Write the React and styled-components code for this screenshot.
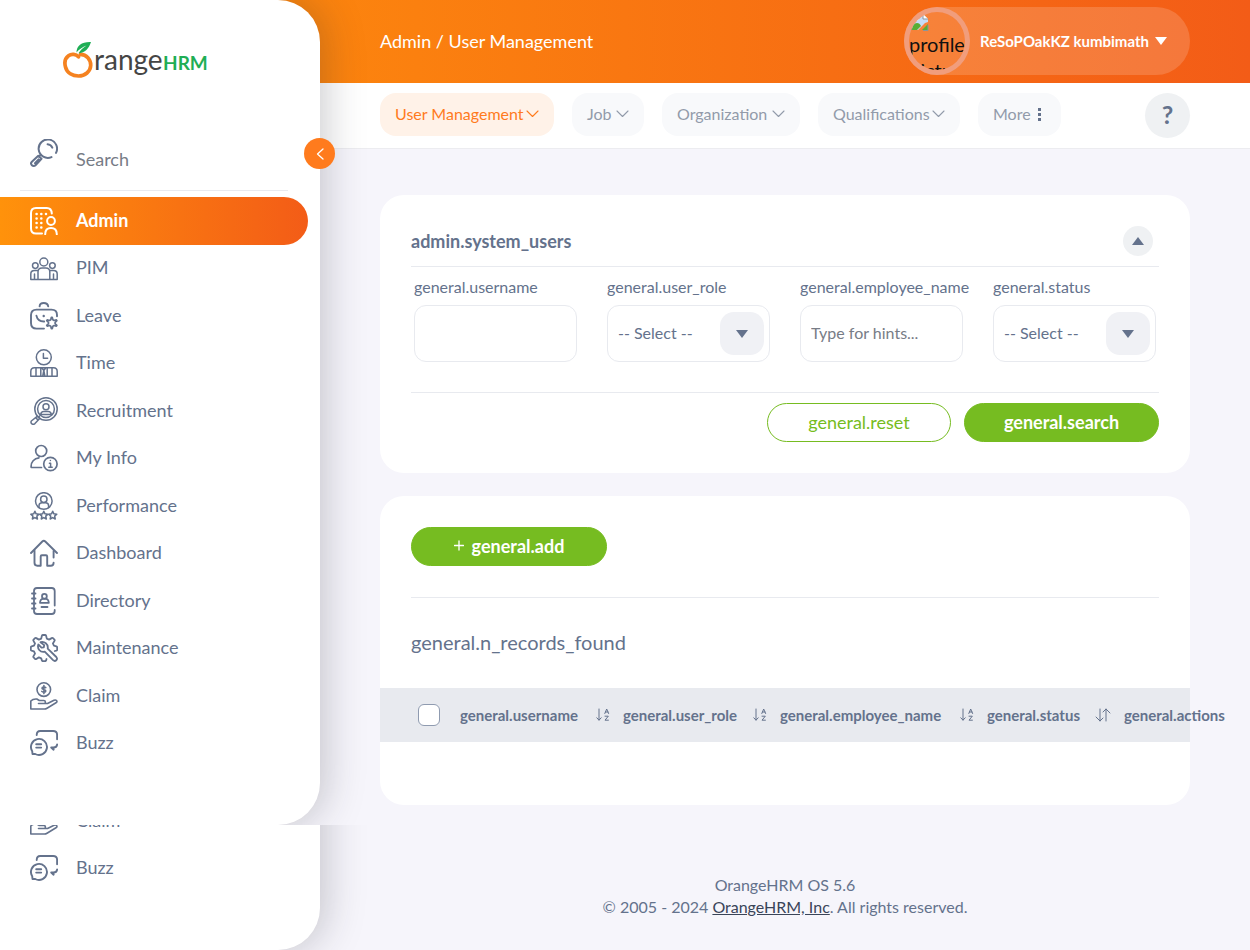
import React from "react";
import styled, { createGlobalStyle, css } from "styled-components";

const slate = "#64728c";
const orange = "#ff7b1d";
const green = "#76bc21";
const line = "#e8eaef";
const brandGradient = "linear-gradient(90deg, #ff920b, #f35c17)";

const GlobalStyle = createGlobalStyle`
  *, *::before, *::after { box-sizing: border-box; }
  body {
    margin: 0;
    background: #f6f5fb;
    color: ${slate};
    font-family: Lato, "Open Sans", sans-serif;
    font-size: 16px;
  }
  button, input, select { font: inherit; color: inherit; }
  h1, h2, p, ul { margin: 0; padding: 0; font-weight: 400; }
  ul { list-style: none; }
`;

const Shell = styled.div`
  display: grid;
  grid-template-columns: 320px minmax(0, 1fr);
  overflow-x: hidden;
`;

/* ---------- side panel ---------- */

const Sidebar = styled.aside`
  grid-column: 1;
  grid-row: 1;
  z-index: 2;
`;

const Slice = styled.div`
  clip-path: inset(0 -90px 0 0);
  ${(p) =>
    p.$tail &&
    css`
      display: flex;
      flex-direction: column;
      justify-content: flex-end;
      height: 125px;
    `}
`;

const Panel = styled.div`
  position: relative;
  flex: none;
  padding-top: ${(p) => (p.$tail ? "96px" : "0")};
  padding-bottom: 58px;
  background: #fff;
  border-radius: 0 42px 42px 0;
  box-shadow: 4px 0 40px rgba(40, 40, 50, 0.25);
`;

const Brand = styled.a`
  display: block;
  padding: 40px 0 52px 62px;
  line-height: 0;
`;

const SearchRow = styled.label`
  display: flex;
  align-items: flex-start;
  gap: 18px;
  height: 57px;
  margin: 0 32px 6px 20px;
  padding: 5px 0 0 10px;
  border-bottom: 1px solid ${line};
`;

const SearchInput = styled.input`
  width: 160px;
  height: 24px;
  margin-top: 8px;
  padding: 0;
  border: 0;
  outline: 0;
  background: transparent;
  font-size: 18px;
  &::placeholder { color: #777c86; opacity: 1; }
`;

const Menu = styled.ul`
  display: grid;
  grid-auto-rows: 1fr;
  height: ${(p) => (p.$short ? "95px" : "570px")};
`;

const MenuLink = styled.a`
  display: flex;
  align-items: center;
  gap: 18px;
  height: 100%;
  margin-right: 12px;
  padding-left: 30px;
  border-radius: 0 24px 24px 0;
  color: ${slate};
  font-size: 18px;
  line-height: 24px;
  text-decoration: none;
  ${(p) =>
    p.$active &&
    css`
      background: ${brandGradient};
      color: #fff;
      font-weight: 700;
    `}
`;

const MenuText = styled.span`
  padding-bottom: 2px;
`;

const CollapseButton = styled.button`
  position: absolute;
  top: 138px;
  right: -15px;
  display: grid;
  place-items: center;
  width: 31px;
  height: 31px;
  padding: 0;
  border: 0;
  border-radius: 50%;
  background: ${orange};
`;

/* ---------- top area ---------- */

const Page = styled.div`
  grid-column: 1 / -1;
  grid-row: 1;
  display: flex;
  flex-direction: column;
  min-width: 0;
`;

const TopBar = styled.header`
  display: flex;
  align-items: center;
  justify-content: space-between;
  height: 83px;
  padding: 0 60px 2px 380px;
  background: ${brandGradient};
  color: #fff;
`;

const Crumb = styled.h1`
  font-size: 18px;
  line-height: 24px;
`;

const UserButton = styled.button`
  display: flex;
  align-items: center;
  gap: 6px;
  width: 286px;
  height: 68px;
  padding: 0;
  border: 0;
  border-radius: 34px;
  background: rgba(255, 255, 255, 0.16);
  color: #fff;
  font-size: 15px;
  font-weight: 700;
`;

const Avatar = styled.span`
  display: flex;
  flex-direction: column;
  width: 66px;
  height: 68px;
  margin-right: 4px;
  border: 5px solid #f19d7c;
  border-radius: 50%;
  overflow: hidden;
  color: #111;
  font-size: 20px;
  font-weight: 400;
  line-height: 26px;
  text-align: left;
  svg { flex: none; margin: 1px 0 0 2px; }
`;

const TabBar = styled.nav`
  display: flex;
  align-items: flex-start;
  gap: 18px;
  height: 66px;
  padding: 10px 60px 0 380px;
  background: #fff;
  border-bottom: 1px solid #ececf0;
`;

const Tab = styled.button`
  display: flex;
  align-items: center;
  justify-content: space-between;
  width: ${(p) => p.$width}px;
  height: 43px;
  padding: 0 15px 2px;
  border: 0;
  border-radius: 16px;
  background: ${(p) => (p.$active ? "#fff2e8" : "#f8f9fb")};
  color: ${(p) => (p.$active ? orange : "#929baa")};
  font-size: 16px;
  white-space: nowrap;
`;

const HelpButton = styled.button`
  width: 45px;
  height: 45px;
  margin-left: auto;
  padding: 0 0 4px;
  border: 0;
  border-radius: 50%;
  background: #eff1f3;
  font-size: 25px;
  font-weight: 700;
`;

/* ---------- cards ---------- */

const Content = styled.main`
  display: flex;
  flex-direction: column;
  gap: 23px;
  padding: 46px 60px 0 380px;
`;

const Card = styled.section`
  padding: 31px 0;
  background: #fff;
  border-radius: 24px;
`;

const CardHead = styled.div`
  display: flex;
  align-items: center;
  justify-content: space-between;
  margin: 0 31px;
  padding: 0 6px 10px 0;
  border-bottom: 1px solid ${line};
`;

const CardTitle = styled.h2`
  font-size: 18px;
  font-weight: 700;
  line-height: 24px;
`;

const RoundButton = styled.button`
  display: grid;
  place-items: center;
  width: 30px;
  height: 30px;
  padding: 0;
  border: 0;
  border-radius: 50%;
  background: #eff1f3;
`;

const Filters = styled.div`
  display: grid;
  grid-template-columns: repeat(4, minmax(0, 1fr));
  gap: 30px;
  margin: 0 31px;
  padding: 10px 3px 30px;
  border-bottom: 1px solid ${line};
`;

const Field = styled.div`
  display: flex;
  flex-direction: column;
  gap: 8px;
`;

const FieldLabel = styled.label`
  font-size: 16px;
  line-height: 20px;
  white-space: nowrap;
`;

const controlBox = css`
  width: 100%;
  height: 57px;
  padding: 0 10px 2px;
  border: 1px solid ${line};
  border-radius: 12px;
  outline: 0;
  background: #fff;
  font-size: 16px;
`;

const TextInput = styled.input`
  ${controlBox}
  &::placeholder { color: #777c86; opacity: 1; }
`;

const SelectWrap = styled.div`
  display: grid;
  grid-template-columns: minmax(0, 1fr) 50px;
  align-items: center;
`;

const Select = styled.select`
  ${controlBox}
  grid-column: 1 / -1;
  grid-row: 1;
  appearance: none;
`;

const SelectArrow = styled.span`
  grid-column: 2;
  grid-row: 1;
  display: grid;
  place-items: center;
  width: 44px;
  height: 43px;
  border-radius: 14px;
  background: #f0f1f5;
  pointer-events: none;
`;

const Actions = styled.div`
  display: flex;
  justify-content: flex-end;
  gap: 13px;
  padding: 10px 31px 0;
`;

const PillButton = styled.button`
  display: flex;
  align-items: center;
  justify-content: center;
  gap: 8px;
  width: ${(p) => p.$width}px;
  height: 39px;
  padding: 0 0 2px;
  border: 1px solid ${green};
  border-radius: 20px;
  background: ${(p) => (p.$outline ? "#fff" : green)};
  color: ${(p) => (p.$outline ? green : "#fff")};
  font-size: 18px;
  font-weight: ${(p) => (p.$outline ? 400 : 700)};
`;

const Toolbar = styled.div`
  margin: 0 31px;
  padding-bottom: 31px;
  border-bottom: 1px solid ${line};
`;

const Count = styled.p`
  padding: 31px 31px 33px;
  font-size: 20px;
  line-height: 26px;
`;

const TableArea = styled.div`
  padding-bottom: 32px;
  background: linear-gradient(${line}, ${line}) 0 0 / 100% 54px no-repeat;
`;

const Table = styled.table`
  width: 849px;
  table-layout: fixed;
  border-collapse: collapse;
`;

const Head = styled.th`
  width: ${(p) => p.$width}px;
  height: 54px;
  padding: 0 0 0 ${(p) => p.$indent || 0}px;
  font-size: 15px;
  font-weight: 700;
  text-align: left;
  white-space: nowrap;
`;

const HeadInner = styled.span`
  display: flex;
  align-items: center;
  justify-content: space-between;
  padding-right: 13px;
`;

const Tick = styled.input`
  display: block;
  appearance: none;
  width: 22px;
  height: 22px;
  margin: 0;
  border: 1px solid #8f9bb0;
  border-radius: 6px;
  background: #fff;
`;

const SortButton = styled.button`
  display: block;
  padding: 0;
  border: 0;
  background: none;
  line-height: 0;
`;

const Footer = styled.footer`
  padding: 69px 60px 0 380px;
  font-size: 16px;
  line-height: 22px;
  text-align: center;
  a { color: #3a4458; }
`;

/* ---------- drawings ---------- */

const Icon = styled.svg`
  flex: none;
`;

const Glyph = ({ w = 28, h = 28, sw = 1.7, children, ...rest }) => (
  <Icon
    width={w}
    height={h}
    viewBox={`0 0 ${w} ${h}`}
    fill="none"
    stroke="currentColor"
    strokeWidth={sw}
    strokeLinecap="round"
    strokeLinejoin="round"
    aria-hidden="true"
    {...rest}
  >
    {children}
  </Icon>
);

const star = (cx, cy, r) =>
  "M" +
  Array.from({ length: 10 }, (_, i) => {
    const a = -Math.PI / 2 + (i * Math.PI) / 5;
    const d = i % 2 ? r * 0.48 : r;
    return `${(cx + d * Math.cos(a)).toFixed(2)} ${(cy + d * Math.sin(a)).toFixed(2)}`;
  }).join("L") +
  "Z";

const cog = (cx, cy, outer, inner, teeth) => {
  const step = (Math.PI * 2) / teeth;
  const pt = (a, r) => `${(cx + r * Math.cos(a)).toFixed(2)} ${(cy + r * Math.sin(a)).toFixed(2)}`;
  let d = "";
  for (let i = 0; i < teeth; i++) {
    const a = i * step - Math.PI / 2;
    d += `${i ? "L" : "M"}${pt(a - step * 0.3, inner)}L${pt(a - step * 0.08, outer)}L${pt(a + step * 0.08, outer)}L${pt(a + step * 0.3, inner)}`;
  }
  return d + "Z";
};

const drawings = {
  search: (
    <Glyph sw={2}>
      <path d="M26 13.9A9.200 9.200 0 1 0 21.500 18.100" />
      <path d="M17.600 5.200c2.300.2 3.900 1.400 4.700 3.400M10.500 15.800l-1.600 1.900M8.300 16.700l3.200 3-6 6.500c-1 1-2.600 1-3.600 0s-1-2.500 0-3.500zM8.600 20.400l-3.600 3.800" />
    </Glyph>
  ),
  admin: (
    <Glyph sw={2}>
      <path d="M21.8 6.5C21.6 3 20 1 16.8 1H6C2.8 1 1 2.8 1 6v15.5c0 3.200 1.800 5 5 5h6" />
      <circle cx="21" cy="14" r="3.9" />
      <path d="M15.2 27.2c0-4 2.200-6.200 5.800-6.200s5.800 2.200 5.800 6.200" />
      <path strokeWidth="2.6" d="M6.6 7h.01M11.3 7h.01M16 7h.01M6.6 11.5h.01M11.3 11.5h.01M6.6 16h.01M11.3 16h.01M6.6 20.5h.01M11.3 20.5h.01" />
    </Glyph>
  ),
  pim: (
    <Glyph sw={1.500}>
      <circle cx="13.8" cy="8" r="4" />
      <circle cx="5.3" cy="11.6" r="2.8" />
      <circle cx="22.4" cy="11.6" r="2.8" />
      <path d="M8 25.6V18c0-2.800 1.600-4 4-4h3.800c2.400 0 4 1.200 4 4v7.600M8 16.600H4.500C2 16.600.8 17.800.8 20v5.600h26.400V20c0-2.200-1.200-3.400-3.700-3.400h-3.700M4.500 20v5.600M23.500 20v5.600" />
    </Glyph>
  ),
  leave: (
    <Glyph sw={1.900}>
      <path d="M9.600 4.300C9.800 1.800 10.800 1 13.800 1s4 .8 4.400 3.300" />
      <path d="M14 26.600H6.500C2.800 26.600 1 24.600 1 21v-8c0-3.400 2-5.400 5.500-5.400h15C25 7.600 27 9.600 27 13v1.200" />
      <path d="M6.400 13.600c.8 3.600 3.600 6 7.800 5.900" />
      <path d="M13.700 14h.01" strokeWidth="2.400" />
      <path d={cog(21.800, 21, 5.600, 3.400, 6)} strokeWidth="1.700" />
    </Glyph>
  ),
  time: (
    <Glyph sw={1.500}>
      <circle cx="13.800" cy="8.300" r="7.500" />
      <path d="M13.400 4.500v4.800h4.200" />
      <path d="M.8 27.200v-4.600c0-2.500 1.200-3.800 3.700-3.800h19c2.500 0 3.700 1.300 3.700 3.800v4.600zM6 19v8M22 19v8M10.800 19v8M17.200 19v8M12.300 19.500l1.500 2 1.500-2M13.800 21.500l-1 5.500M13.800 21.500l1 5.500" />
    </Glyph>
  ),
  recruitment: (
    <Glyph sw={1.500}>
      <circle cx="16" cy="12" r="11.200" />
      <circle cx="16" cy="12" r="8.400" />
      <circle cx="16" cy="9.800" r="3" />
      <path d="M10.600 17.500c.4-2 1.400-2.900 3-2.900h4.800c1.600 0 2.600.9 3 2.900zM7.500 19.200l2.200 2.200-5 5.400c-1.800 1.400-4.600-.4-3.400-2.800zM8.600 20.200l.9-1.200M6 21l1.900 1.900" />
    </Glyph>
  ),
  info: (
    <Glyph sw={1.700}>
      <circle cx="11.200" cy="7" r="5.500" />
      <path d="M11.500 23.500H1.200C.5 18 4.500 14.300 9 13.800" />
      <circle cx="20.400" cy="20" r="6.700" />
      <path d="M20.400 16.600h.01M19.400 19.200h1.200v4M18.800 23.300h3.400" strokeWidth="1.500" />
    </Glyph>
  ),
  performance: (
    <Glyph sw={1.500}>
      <circle cx="13.800" cy="9" r="8.300" />
      <circle cx="13.800" cy="7.300" r="3.200" />
      <path d="M9 15.400v-1.600c0-2 1.300-3 3.200-3h3.200c1.900 0 3.200 1 3.200 3v1.600" />
      <path d={star(4.900, 23.500, 4.300) + star(13.800, 23.500, 4.300) + star(22.700, 23.500, 4.300)} fill="#fff" />
    </Glyph>
  ),
  dashboard: (
    <Glyph sw={1.900}>
      <path d="M1 14 12.300 2.500c1-1 2-1 3 0L27 14" />
      <path d="M4.500 11.500v12.300c0 1.800 1 2.900 2.800 2.900h3.400v-9.200c0-.8.4-1.200 1.200-1.200H16c.8 0 1.200.4 1.200 1.200v9.200h3.600c1.800 0 2.800-1.100 2.800-3M23.600 12v6.500" />
    </Glyph>
  ),
  directory: (
    <Glyph sw={1.800}>
      <path d="M24.700 18.500V4c0-2-1-3-3-3H7C5 1 4 2 4 4v20c0 2 1 3 3 3h14.700c2 0 3-1 3-3v-1" />
      <path d="M2 6.500h3.500M2 11.500h3.500M2 16.500h3.500M2 21.500h3.500M11.500 20h6" />
      <circle cx="14.400" cy="9.200" r="2.400" />
      <path d="M10 15.800c.2-2.600 1.400-4 3-4h2.800c1.600 0 2.800 1.400 3 4z" />
    </Glyph>
  ),
  maintenance: (
    <Glyph sw={1.800}>
      <path d="M11.200 4.600 11.900 1.800c.2-.6.500-.8 1.100-.8h2c.6 0 .9.200 1.100.8l.7 2.800 2.300 1 2.600-1.500c.5-.3.9-.3 1.300.1l1.400 1.400c.4.400.4.800.1 1.300l-1.600 2.600 1 2.200 2.500.7c.6.200.8.500.8 1.100v2c0 .6-.2.900-.8 1.100l-1.600.4M11.200 4.600l-2.300 1-2.600-1.500c-.5-.3-.9-.3-1.300.1L3.600 5.600c-.4.400-.4.800-.1 1.300l1.500 2.600-1 2.200-2.400.7c-.6.200-.8.500-.8 1.100v2c0 .6.200.9.800 1.100l2.400.7 1 2.300-1.500 2.500c-.3.500-.3.900.1 1.300L5 24.800c.4.400.8.400 1.300.1l2.600-1.500 2.300 1 .7 2c.2.600.5.800 1.100.8h2c.6 0 .9-.2 1.100-.8l.4-1.400" />
      <path d="M10.500 8.200c3.800-1.200 8 1.800 7.200 6.400l8.600 8.400c2 2.400-1 5.200-3.200 3.200l-8.400-8.500c-4.700 1-7.700-3.200-6.400-7.200l3.200 3.200 2.300-.4.400-2.200z" />
    </Glyph>
  ),
  claim: (
    <Glyph sw={1.600}>
      <circle cx="13.800" cy="7.600" r="6.800" />
      <path d="M15.800 5.700c-.6-.9-3.800-1-3.800.6 0 1.700 3.800.8 3.800 2.600 0 1.600-3.200 1.600-4 .5M13.900 3.600v8" />
      <path d="M.8 27V19c1.500-1.600 3.500-2.200 6-2l2.500 1.500h4.500c2 0 2.200 3 .2 3H8.500h9l6.500-3.200c2-1 4 .8 2.400 2.200L17 26.200c-.8.500-1.500.8-2.500.8z" />
    </Glyph>
  ),
  buzz: (
    <Glyph sw={1.900}>
      <path d="M6.700 6c0-3 1.300-4 3.500-4h13c2.500 0 3.900 1.300 3.900 3.800v4.400M27.100 15.500c-.2 2-1.500 3-3.700 3h-2.200l2.400 2.200v-2" />
      <path d="M2.200 22.200A8 8 0 1 1 5.200 25H2.500z" />
      <path d="M6.200 15.200h5M6.200 18.600h5" />
    </Glyph>
  ),
};

const Chevron = () => (
  <Glyph w={13} h={8} sw={1.100}>
    <path d="M1 1l5.500 5.500L12 1" />
  </Glyph>
);

const Caret = ({ up }) => (
  <Glyph w={12} h={8} sw={0}>
    <path fill="currentColor" d={up ? "M0 8 6 0l6 8z" : "M0 0h12L6 8z"} />
  </Glyph>
);

const SortAZ = () => (
  <Glyph w={14} h={14} sw={1}>
    <path d="M3 1v11M.8 9.800 3 12.200l2.200-2.400M8.800 5.500 10.700 1l1.900 4.500M9.400 4h2.600M9 8.200h3.300L9 12.200h3.400" />
  </Glyph>
);

const SortBoth = () => (
  <Glyph w={16} h={14} sw={1}>
    <path d="M5 1v12M1 9l4 4 3-3M11 13V1M8 4l3-3 4 4" />
  </Glyph>
);

const BrokenImage = () => (
  <svg width="18" height="18" viewBox="0 0 18 18" aria-hidden="true">
    <path d="M1 1h11l5 5v3l-3 1-7 7H1z" fill="#c5dcf7" />
    <path d="M12 1v5h5" fill="#fff" stroke="#8d9499" />
    <path d="M3 6c0-2 3-2 3-.5 2 0 2 2 0 2H3z" fill="#fff" />
    <path d="M1 17c0-4 2-7 5-7 2 0 3 1 4 3l-4 4z" fill="#59ad35" />
    <path d="m11 17 6-6v6z" fill="#59ad35" />
    <path d="M.5 17V1M17 12v5.500h-5" fill="none" stroke="#8d9499" />
  </svg>
);

const Logo = () => (
  <svg width="146" height="42" viewBox="0 0 146 42" role="img" aria-label="OrangeHRM">
    <path
      d="M16.500 16.800C14 14 9.500 13.500 6.500 15.700 3 18.200 2.400 23 3.500 27 5 33 10.500 36 16.500 36 23 36 28.500 31.500 28.700 25.500 28.900 19.500 24.500 14.500 18.500 14.300"
      fill="none"
      stroke="#f58220"
      strokeWidth="3.700"
      strokeLinecap="round"
    />
    <path d="M14.500 12.500C14.500 5.500 20 1.600 29 2c-2 6.500-6 11-12.500 11.200 2-3.200 4.500-5.600 8-7.700-4 1.600-7.500 4-10 7z" fill="#1fae55" />
    <text x="32" y="30" fontFamily="Lato" fontSize="28" fill="#454545">range</text>
    <text x="101" y="30" fontFamily="Lato" fontSize="19" fontWeight="700" fill="#1fae55">HRM</text>
  </svg>
);

/* ---------- data ---------- */

const menu = [
  ["admin", "Admin"],
  ["pim", "PIM"],
  ["leave", "Leave"],
  ["time", "Time"],
  ["recruitment", "Recruitment"],
  ["info", "My Info"],
  ["performance", "Performance"],
  ["dashboard", "Dashboard"],
  ["directory", "Directory"],
  ["maintenance", "Maintenance"],
  ["claim", "Claim"],
  ["buzz", "Buzz"],
];

const tabs = [
  ["User Management", 174],
  ["Job", 72],
  ["Organization", 138],
  ["Qualifications", 142],
];

const columns = [
  ["general.username", 163, SortAZ],
  ["general.user_role", 157, SortAZ],
  ["general.employee_name", 207, SortAZ],
  ["general.status", 137, SortBoth],
];

const MenuList = ({ items, short }) => (
  <Menu $short={short}>
    {items.map(([id, text]) => (
      <li key={id}>
        <MenuLink href="#" $active={id === "admin"}>
          {drawings[id]}
          <MenuText>{text}</MenuText>
        </MenuLink>
      </li>
    ))}
  </Menu>
);

const SelectField = ({ id, label }) => (
  <Field>
    <FieldLabel htmlFor={id}>{label}</FieldLabel>
    <SelectWrap>
      <Select id={id}>
        <option>-- Select --</option>
      </Select>
      <SelectArrow>
        <Caret />
      </SelectArrow>
    </SelectWrap>
  </Field>
);

const InputField = ({ id, label, placeholder }) => (
  <Field>
    <FieldLabel htmlFor={id}>{label}</FieldLabel>
    <TextInput id={id} placeholder={placeholder} />
  </Field>
);

export default function App() {
  return (
    <Shell>
      <GlobalStyle />
      <Sidebar>
        <Slice>
          <Panel>
            <Brand href="#">
              <Logo />
            </Brand>
            <SearchRow>
              {drawings.search}
              <SearchInput placeholder="Search" aria-label="Search" />
            </SearchRow>
            <MenuList items={menu} />
            <CollapseButton aria-label="Collapse menu">
              <Glyph w={8} h={12} sw={1.3} stroke="#fff">
                <path d="M7 1 1.500 6 7 11" />
              </Glyph>
            </CollapseButton>
          </Panel>
        </Slice>
        <Slice $tail>
          <Panel $tail>
            <MenuList items={menu.slice(-2)} short />
          </Panel>
        </Slice>
      </Sidebar>

      <Page>
        <TopBar>
          <Crumb>Admin / User Management</Crumb>
          <UserButton>
            <Avatar>
              <BrokenImage />
              profile picture
            </Avatar>
            ReSoPOakKZ kumbimath
            <Caret />
          </UserButton>
        </TopBar>
        <TabBar>
          {tabs.map(([text, width], i) => (
            <Tab key={text} $width={width} $active={i === 0}>
              {text}
              <Chevron />
            </Tab>
          ))}
          <Tab $width={83}>
            More
            <Glyph w={14} h={14} sw={0} color={slate}>
              <path fill="currentColor" d="M6 1h3v3H6zM6 6h3v3H6zM6 11h3v3H6z" />
            </Glyph>
          </Tab>
          <HelpButton aria-label="Help">?</HelpButton>
        </TabBar>

        <Content>
          <Card>
            <CardHead>
              <CardTitle>admin.system_users</CardTitle>
              <RoundButton aria-label="Collapse filters">
                <Caret up />
              </RoundButton>
            </CardHead>
            <Filters>
              <InputField id="username" label="general.username" />
              <SelectField id="role" label="general.user_role" />
              <InputField id="employee" label="general.employee_name" placeholder="Type for hints..." />
              <SelectField id="status" label="general.status" />
            </Filters>
            <Actions>
              <PillButton $outline $width={184}>general.reset</PillButton>
              <PillButton $width={195}>general.search</PillButton>
            </Actions>
          </Card>

          <Card>
            <Toolbar>
              <PillButton $width={196}>
                <Glyph w={10} h={12} sw={1.3}>
                  <path d="M5 1v9M.5 5.500h9" />
                </Glyph>
                general.add
              </PillButton>
            </Toolbar>
            <Count>general.n_records_found</Count>
            <TableArea>
              <Table>
                <thead>
                  <tr>
                    <Head $width={80} $indent={38}>
                      <Tick type="checkbox" aria-label="Select all" />
                    </Head>
                    {columns.map(([text, width, Sort]) => (
                      <Head key={text} $width={width}>
                        <HeadInner>
                          {text}
                          <SortButton aria-label={`Sort by ${text}`}>
                            <Sort />
                          </SortButton>
                        </HeadInner>
                      </Head>
                    ))}
                    <Head $width={105}>general.actions</Head>
                  </tr>
                </thead>
              </Table>
            </TableArea>
          </Card>
        </Content>

        <Footer>
          <p>OrangeHRM OS 5.6</p>
          <p>
            © 2005 - 2024 <a href="#">OrangeHRM, Inc</a>. All rights reserved.
          </p>
        </Footer>
      </Page>
    </Shell>
  );
}
